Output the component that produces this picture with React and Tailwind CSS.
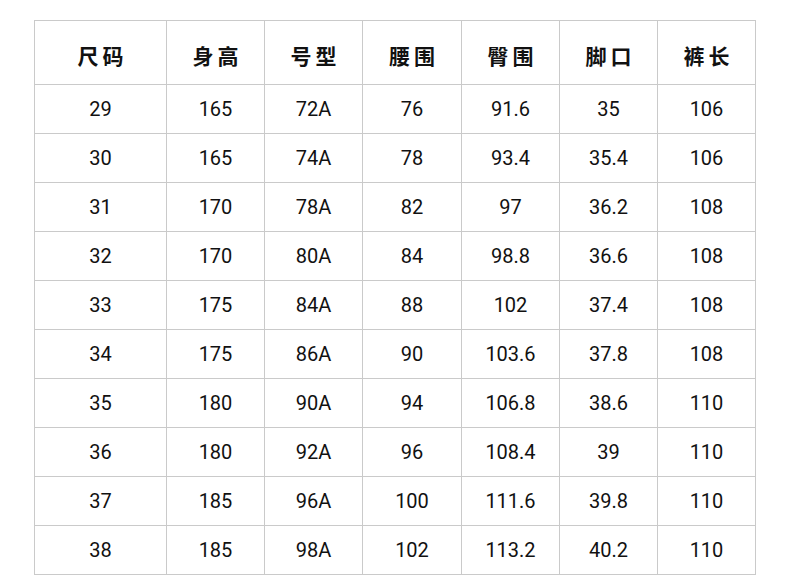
import React from "react";

const headers = ["尺码", "身高", "号型", "腰围", "臀围", "脚口", "裤长"];
const rows = [
  ["29", "165", "72A", "76", "91.6", "35", "106"],
  ["30", "165", "74A", "78", "93.4", "35.4", "106"],
  ["31", "170", "78A", "82", "97", "36.2", "108"],
  ["32", "170", "80A", "84", "98.8", "36.6", "108"],
  ["33", "175", "84A", "88", "102", "37.4", "108"],
  ["34", "175", "86A", "90", "103.6", "37.8", "108"],
  ["35", "180", "90A", "94", "106.8", "38.6", "110"],
  ["36", "180", "92A", "96", "108.4", "39", "110"],
  ["37", "185", "96A", "100", "111.6", "39.8", "110"],
  ["38", "185", "98A", "102", "113.2", "40.2", "110"],
];
const widths = ["w-[132px]", "w-[98px]", "w-[98px]", "w-[99px]", "w-[98px]", "w-[98px]", "w-[98px]"];

export default function App() {
  return (
    <div className="w-[790px] h-[575px] bg-white overflow-hidden pt-[20px] pl-[34px]">
      <table className="border-collapse table-fixed w-[722px] text-[#111]" style={{ fontFamily: "Roboto, 'Noto Sans CJK SC', sans-serif" }}>
        <thead>
          <tr className="h-[64px]">
            {headers.map((h, i) => (
              <th
                key={i}
                className={`${widths[i]} border border-[#cacaca] p-0 pt-[6px] text-center align-middle font-bold text-[21px] tracking-[4px] indent-[4px]`}
                style={{ fontFamily: "'Noto Sans CJK SC', sans-serif" }}
              >
                {h}
              </th>
            ))}
          </tr>
        </thead>
        <tbody>
          {rows.map((r, ri) => (
            <tr key={ri} className="h-[49px]">
              {r.map((c, ci) => (
                <td key={ci} className="border border-[#cacaca] p-0 text-center align-middle text-[20px] font-normal">
                  {c}
                </td>
              ))}
            </tr>
          ))}
        </tbody>
      </table>
    </div>
  );
}
